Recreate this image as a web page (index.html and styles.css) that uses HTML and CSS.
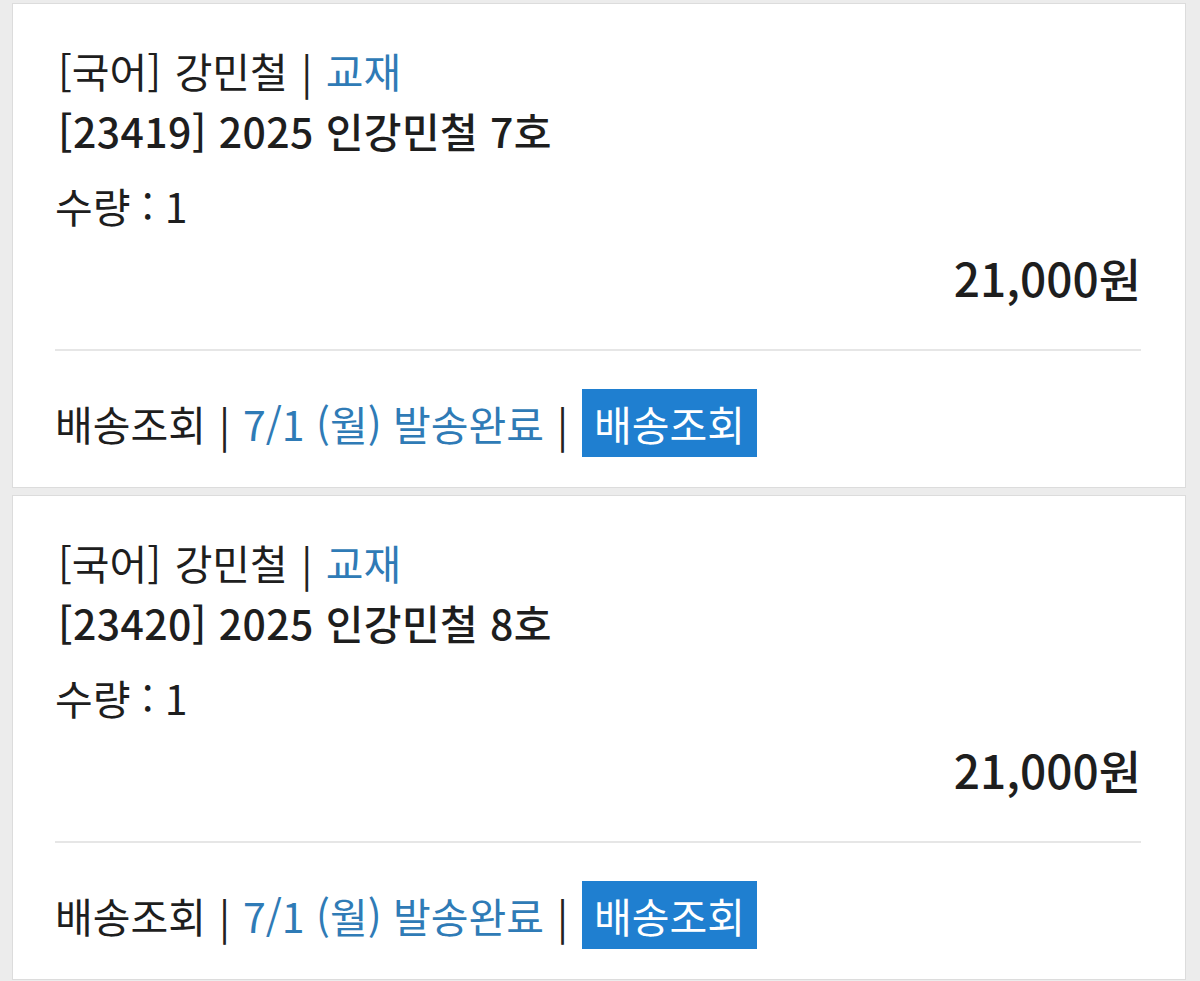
FILE: index.html
```html
<!DOCTYPE html>
<html lang="ko">
<head>
  <meta charset="UTF-8" />
  <title>주문 내역</title>
  <link rel="stylesheet" href="styles.css">
</head>
<body>

  <div class="orderList">
    <div class="orderCard">
      <p class="category">[국어] 강민철 <span class="bar">|</span> <span class="blue">교재</span></p>
      <p class="title">[23419] 2025 인강민철 7호</p>
      <p class="qty">수량 : 1</p>
      <p class="price">21,000원</p>
      <hr class="divider" />
      <div class="shipRow">
        <span>배송조회</span>
        <span class="bar">|</span>
        <span class="blue">7/1 (월) 발송완료</span>
        <span class="bar">|</span>
        <button class="shipBtn">배송조회</button>
      </div>
    </div>

    <div class="orderCard">
      <p class="category">[국어] 강민철 <span class="bar">|</span> <span class="blue">교재</span></p>
      <p class="title">[23420] 2025 인강민철 8호</p>
      <p class="qty">수량 : 1</p>
      <p class="price">21,000원</p>
      <hr class="divider" />
      <div class="shipRow">
        <span>배송조회</span>
        <span class="bar">|</span>
        <span class="blue">7/1 (월) 발송완료</span>
        <span class="bar">|</span>
        <button class="shipBtn">배송조회</button>
      </div>
    </div>
  </div>

</body>
</html>
```

FILE: styles.css
```css
body {
  margin: 0;
  background: #ececec;
  font-family: "Noto Sans CJK KR", "Noto Sans", sans-serif;
  color: #1e1e1e;
}
.orderList {
  display: flex;
  flex-direction: column;
  gap: 7px;
  padding: 3px 14px 0 12px;
}
.orderCard {
  background: #fff;
  border: 1px solid #dcdcdc;
  padding: 36px 44px 30px 42px;
  font-size: 41px;
}
.orderCard p {
  margin: 0;
}
.category {
  line-height: 60px;
  padding-left: 3px;
  word-spacing: 2px;
}
.title {
  line-height: 60px;
  font-weight: 500;
  padding-left: 3px;
  letter-spacing: 0.4px;
}
.qty {
  margin-top: 20px !important;
  line-height: 50px;
}
.price {
  margin-top: 22px !important;
  line-height: 50px;
  text-align: right;
  font-size: 46px;
  font-weight: 500;
}
.divider {
  margin: 47px 0 0;
  border: none;
  border-top: 2px solid #e6e6e6;
}
.blue {
  color: #2f7bb6;
}
.bar {
  color: #222;
}
.shipRow {
  display: flex;
  align-items: center;
  gap: 13px;
  margin-top: 38px;
}
.shipBtn {
  width: 175px;
  height: 68px;
  padding: 0;
  margin-left: 1px;
  background: #1f7fd0;
  color: #fff;
  border: none;
  font-family: inherit;
  font-size: 41px;
}
```
